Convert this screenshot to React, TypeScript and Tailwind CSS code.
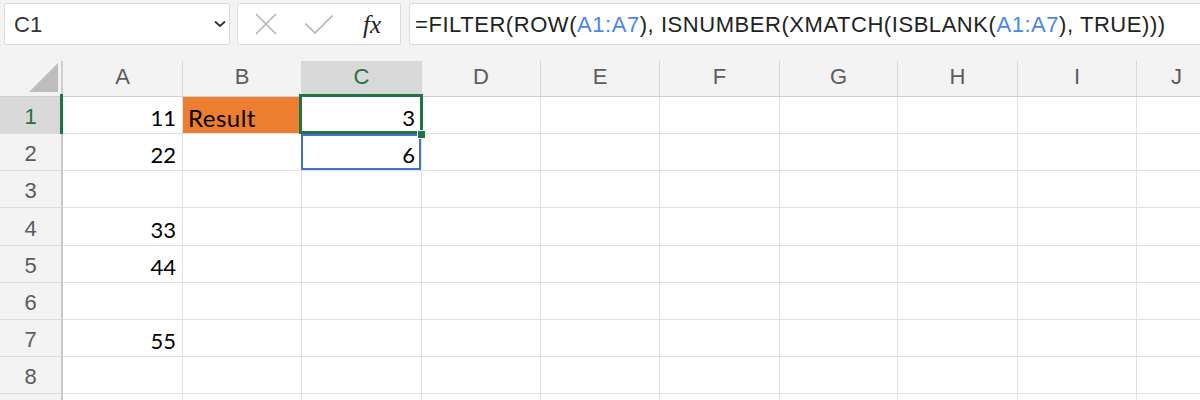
import React from "react";

const colWidths = [
  "w-[120px]",
  "w-[119px]",
  "w-[120px]",
  "w-[119px]",
  "w-[119px]",
  "w-[120px]",
  "w-[118px]",
  "w-[120px]",
  "w-[119px]",
  "w-[80px]",
];
const letters = ["A", "B", "C", "D", "E", "F", "G", "H", "I", "J"];
const rowHeights = [
  "h-[37px]",
  "h-[37px]",
  "h-[37px]",
  "h-[38px]",
  "h-[37px]",
  "h-[37px]",
  "h-[37px]",
  "h-[37px]",
  "h-[37px]",
];

const values: Record<string, string> = {
  "1-0": "11",
  "2-0": "22",
  "4-0": "33",
  "5-0": "44",
  "7-0": "55",
  "1-2": "3",
  "2-2": "6",
};

function Cell({ r, c }: { r: number; c: number }) {
  const v = values[`${r}-${c}`];
  const isResult = r === 1 && c === 1;
  const isC1 = r === 1 && c === 2;
  const isC2 = r === 2 && c === 2;
  return (
    <div
      className={`relative shrink-0 ${colWidths[c]} h-full border-r border-b border-[#e1e1e1] flex items-end leading-none text-black font-['Lato'] ${
        isResult
          ? "bg-[#ed7d31] justify-start pl-[5px] pb-[3px] text-[24px] tracking-[0.5px]"
          : "justify-end pr-[6px] pb-[4px] text-[22px]"
      }`}
    >
      {isResult ? "Result" : v ?? ""}
      {isC1 && (
        <>
          <div className="absolute -left-[3px] -top-[3px] -right-[2px] -bottom-[1px] border-[3px] border-[#217346] pointer-events-none" />
          <div className="absolute left-[115px] top-[33px] w-[9px] h-[9px] bg-[#217346] border border-white z-10" />
        </>
      )}
      {isC2 && (
        <div className="absolute -left-[1px] top-0 right-0 bottom-0 border-2 border-[#4472c4] pointer-events-none" />
      )}
    </div>
  );
}

export default function App() {
  return (
    <div className="w-[1200px] h-[400px] overflow-hidden bg-white font-['Liberation_Sans',Arial,sans-serif]">
      {/* Toolbar */}
      <div className="h-[61px] bg-[#f3f3f3] pt-[3px] pl-[4px] flex items-start">
        <div className="w-[226px] h-[42px] bg-white border border-[#dcdcdc] rounded-[2px] flex items-center pl-[9px] pr-[3px] text-[22px] text-[#333]">
          <span className="flex-1">C1</span>
          <svg width="12" height="8" viewBox="0 0 12 8">
            <path d="M1.5 2 L6 6 L10.5 2" fill="none" stroke="#333" strokeWidth="1.8" strokeLinecap="round" strokeLinejoin="round" />
          </svg>
        </div>
        <div className="ml-[7px] w-[164px] h-[42px] bg-white border border-[#dcdcdc] rounded-[2px] flex items-center">
          <svg width="24" height="24" viewBox="0 0 24 24" className="ml-[16px]">
            <path d="M2 2 L22 22 M22 2 L2 22" stroke="#b4b4b4" strokeWidth="1.6" fill="none" />
          </svg>
          <svg width="30" height="22" viewBox="0 0 30 22" className="ml-[26px]">
            <path d="M1.5 10.5 L11 20 L28.5 2.5" stroke="#b4b4b4" strokeWidth="1.6" fill="none" />
          </svg>
          <span className="ml-[29px] font-['Liberation_Serif',serif] italic text-[25px] text-[#222] leading-none">fx</span>
        </div>
        <div className="ml-[8px] flex-1 -mr-[4px] h-[42px] bg-white border border-[#dcdcdc] rounded-[2px] flex items-center pl-[5px] text-[22px] text-[#222] whitespace-nowrap tracking-[0.55px]">
          <span>
            =FILTER(ROW(<span className="text-[#4a86ec]">A1:A7</span>), ISNUMBER(XMATCH(ISBLANK(
            <span className="text-[#4a86ec]">A1:A7</span>), TRUE)))
          </span>
        </div>
      </div>

      {/* Column headers */}
      <div className="flex h-[36px] bg-[#f3f3f3] border-b border-[#cfcfcf]">
        <div className="w-[63px] shrink-0 h-full border-r-2 border-[#d0d0d0] relative flex items-end justify-end pr-[3px] pb-[4px]">
          <svg width="29" height="29" viewBox="0 0 29 29">
            <path d="M29 0 L29 29 L0 29 Z" fill="#bdbdbd" />
          </svg>
        </div>
        {letters.map((l, i) => (
          <div
            key={l}
            className={`${colWidths[i]} shrink-0 h-full border-r border-[#d8d8d8] flex items-center justify-center pb-[5px] text-[22px] ${
              i === 2 ? "bg-[#d9d9d9] text-[#217346]" : "text-[#5c5c5c]"
            }`}
          >
            {l}
          </div>
        ))}
      </div>

      {/* Rows */}
      {rowHeights.map((h, ri) => {
        const r = ri + 1;
        return (
          <div key={r} className={`flex ${h}`}>
            <div
              className={`relative w-[63px] shrink-0 h-full border-r-2 border-b border-r-[#c9c9c9] border-b-[#dadada] flex items-center justify-center pt-[3px] text-[22px] ${
                r === 1 ? "bg-[#d9d9d9] text-[#217346]" : "bg-[#f3f3f3] text-[#5c5c5c]"
              }`}
            >
              {r < 9 ? r : ""}
              {r === 1 && (
                <div className="absolute -right-[2px] -top-[3px] -bottom-[3px] w-[3px] bg-[#217346]" />
              )}
            </div>
            {letters.map((_, ci) => (
              <Cell key={ci} r={r} c={ci} />
            ))}
          </div>
        );
      })}
    </div>
  );
}
